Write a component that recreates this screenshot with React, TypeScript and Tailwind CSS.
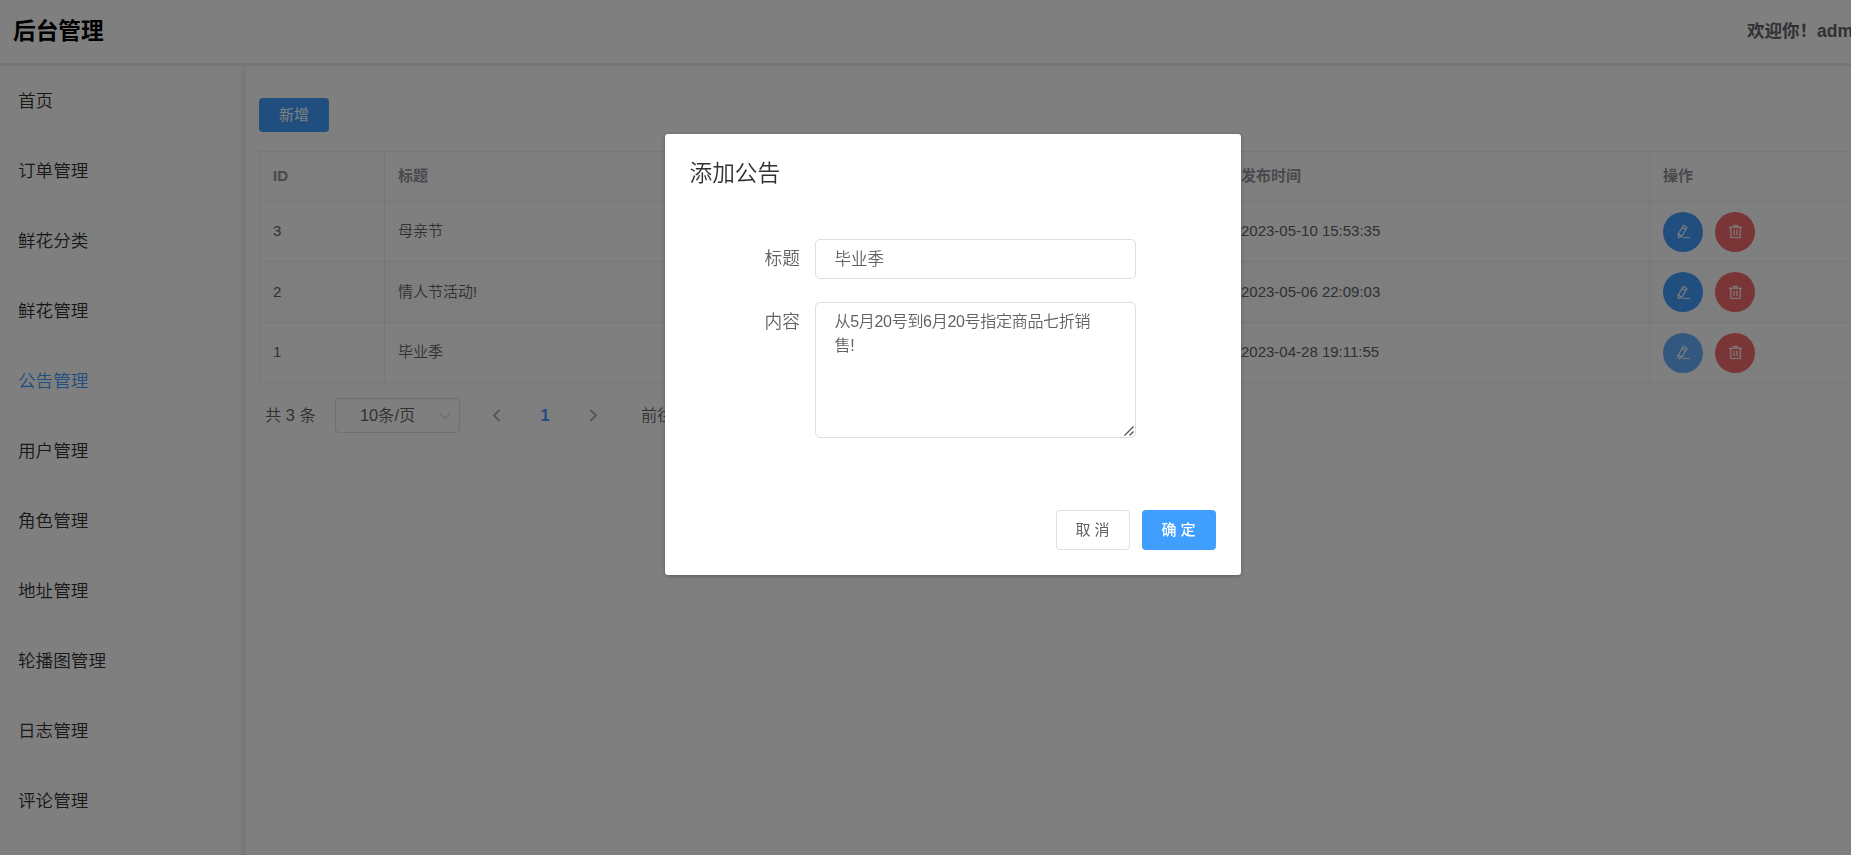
import React from "react";
import { useState } from "react";

type Notice = {
  id: number;
  title: string;
  content: string;
  time: string;
};

const menus = [
  "首页",
  "订单管理",
  "鲜花分类",
  "鲜花管理",
  "公告管理",
  "用户管理",
  "角色管理",
  "地址管理",
  "轮播图管理",
  "日志管理",
  "评论管理",
];

const notices: Notice[] = [
  { id: 3, title: "母亲节", content: "", time: "2023-05-10 15:53:35" },
  { id: 2, title: "情人节活动!", content: "", time: "2023-05-06 22:09:03" },
  { id: 1, title: "毕业季", content: "", time: "2023-04-28 19:11:55" },
];

const EditIcon = () => (
  <svg viewBox="0 0 1024 1024" className="w-[15px] h-[15px]" fill="currentColor" stroke="currentColor" strokeWidth="16">
    <path d="m199.04 672.64 193.984 112 224-387.968-193.92-112-224 388.032zm-23.872 60.16 32.896 148.288 144.896-45.696L175.168 732.8zM455.04 229.248l193.92 112 56.704-98.112-193.984-112-56.64 98.112zM104.32 708.8l384-665.024 304.768 175.936L409.152 884.8h.064l-248.448 78.336L104.32 708.8zm384 254.272v-64h448v64h-448z" />
  </svg>
);

const DeleteIcon = () => (
  <svg viewBox="0 0 1024 1024" className="w-[15px] h-[15px]" fill="currentColor" stroke="currentColor" strokeWidth="16">
    <path d="M160 256H96a32 32 0 0 1 0-64h256V95.936a32 32 0 0 1 32-32h256a32 32 0 0 1 32 32V192h256a32 32 0 1 1 0 64h-64v672a32 32 0 0 1-32 32H192a32 32 0 0 1-32-32V256zm448-64v-64H416v64h192zM224 896h576V256H224v640zm192-128a32 32 0 0 1-32-32V416a32 32 0 0 1 64 0v320a32 32 0 0 1-32 32zm192 0a32 32 0 0 1-32-32V416a32 32 0 0 1 64 0v320a32 32 0 0 1-32 32z" />
  </svg>
);

const Chevron = ({ d, className }: { d: string; className: string }) => (
  <svg viewBox="0 0 12 12" className={className} fill="none" stroke="currentColor">
    <path d={d} />
  </svg>
);

const Sidebar = () => (
  <aside className="w-[246px] shrink-0 border-r-[5px] border-[#f3f3f3]">
    <ul>
      {menus.map((name) => (
        <li
          key={name}
          className={`h-[70px] pl-[18px] leading-[70px] text-[17.6px] font-[350] ${name === "公告管理" ? "text-[#409eff]" : "text-[#303133]"}`}
        >
          {name}
        </li>
      ))}
    </ul>
  </aside>
);

const NoticeTable = () => (
  <div className="mt-[19px] overflow-hidden">
    <table className="w-[1610px] table-fixed border-collapse text-[15px] font-[350] text-[#606266]">
      <colgroup>
        <col className="w-[125px]" />
        <col className="w-[421px]" />
        <col className="w-[422px]" />
        <col className="w-[422px]" />
        <col />
      </colgroup>
      <thead>
        <tr className="h-[50px] text-left text-[#909399]">
          {["ID", "标题", "内容", "发布时间", "操作"].map((h) => (
            <th key={h} className="border border-[#ebeef5] px-[13px] py-0 font-bold">{h}</th>
          ))}
        </tr>
      </thead>
      <tbody>
        {notices.map((n, i) => (
          <tr key={n.id} className={i === 1 ? "h-[61px] bg-[#fcfcfc]" : "h-[60px]"}>
            <td className="border border-[#ebeef5] px-[13px] py-0">{n.id}</td>
            <td className="border border-[#ebeef5] px-[13px] py-0">{n.title}</td>
            <td className="border border-[#ebeef5] px-[13px] py-0">{n.content}</td>
            <td className="border border-[#ebeef5] px-[13px] py-0">{n.time}</td>
            <td className="border border-[#ebeef5] px-[13px] py-0">
              <div className="flex gap-3 text-white">
                <button className={`flex size-10 items-center justify-center rounded-full ${n.id === 1 ? "bg-[#66b1ff]" : "bg-[#409eff]"}`}>
                  <EditIcon />
                </button>
                <button className="flex size-10 items-center justify-center rounded-full bg-[#f56c6c]">
                  <DeleteIcon />
                </button>
              </div>
            </td>
          </tr>
        ))}
      </tbody>
    </table>
  </div>
);

const Pagination = () => (
  <div className="mt-[15px] flex h-[35px] items-center pl-[6px] text-[16.3px] font-[350] text-[#606266]">
    <span className="w-[70px]">共 3 条</span>
    <div className="flex h-[35px] w-[125px] items-center justify-between rounded-[4px] border border-[#dcdfe6] pl-6 pr-2">
      <span>10条/页</span>
      <Chevron d="M1 3.5 6 8.5 11 3.5" className="w-3 h-3 text-[#c0c4cc]" />
    </div>
    <Chevron d="M8.5 1.5 4 6l4.5 4.5" className="ml-[29px] w-[15px] h-[15px] text-[#a8abb2] stroke-[1.5]" />
    <span className="w-[82px] text-center font-bold text-[#409eff]">1</span>
    <Chevron d="M3.5 1.5 8 6l-4.5 4.5" className="w-[15px] h-[15px] text-[#a8abb2] stroke-[1.5]" />
    <span className="ml-[40px]">前往</span>
  </div>
);

const NoticeDialog = () => {
  const [title, setTitle] = useState("毕业季");
  const [content, setContent] = useState("从5月20号到6月20号指定商品七折销售!");

  return (
    <div className="fixed inset-0 bg-black/50">
      <div className="mx-auto mt-[134px] flex h-[441px] w-[576px] translate-x-[27px] flex-col rounded-[3px] bg-white px-[25px] shadow-[0_1px_4px_rgba(0,0,0,0.3)]">
        <h2 className="pt-[24px] text-[22.7px] leading-[30px] font-[350] text-[#303133]">添加公告</h2>
        <div className="mt-[51px] flex pl-[75px]">
          <label className="w-[50px] text-[17.7px] leading-10 font-[350] text-[#606266]">标题</label>
          <input
            value={title}
            onChange={(e) => setTitle(e.target.value)}
            className="h-10 w-[321px] rounded-[5px] border border-[#dcdfe6] px-[19px] pb-[2px] text-[16.5px] font-[350] text-[#606266] outline-none"
          />
        </div>
        <div className="mt-[23px] flex pl-[75px]">
          <label className="w-[50px] text-[17.7px] leading-10 font-[350] text-[#606266]">内容</label>
          <div className="relative h-[136px] w-[321px]">
            <textarea
              value={content}
              onChange={(e) => setContent(e.target.value)}
              className="h-full w-full resize-none rounded-[5px] border border-[#dcdfe6] py-[7px] pl-[19px] pr-[42px] text-[16px] leading-6 font-[350] tracking-[-0.3px] text-[#606266] outline-none"
            />
            <svg viewBox="0 0 10 10" className="pointer-events-none absolute right-[2px] bottom-[2px] size-[10px]" fill="none" stroke="#555" strokeWidth="1.3">
              <path d="M0.5 9.5 9.5 0.5M5.5 9.5 9.5 5.5" />
            </svg>
          </div>
        </div>
        <div className="mt-[72px] flex justify-end gap-3 text-[15px]">
          <button className="h-10 w-[74px] rounded-[4px] border border-[#dcdfe6] pt-px text-[#606266]">取 消</button>
          <button className="h-10 w-[74px] rounded-[4px] bg-[#409eff] pt-px font-medium text-white">确 定</button>
        </div>
      </div>
    </div>
  );
};

const App: React.FC = () => {
  return (
    <div className="flex h-screen flex-col overflow-hidden bg-white font-['Liberation_Sans','Noto_Sans_CJK_SC',sans-serif]">
      <header className="flex h-[66px] shrink-0 items-center justify-between border-b-[3px] border-[#ececec] pl-[13px]">
        <h1 className="text-[22.7px] font-bold text-black">后台管理</h1>
        <div className="w-[104px] whitespace-nowrap text-[17.5px] font-bold text-[#606266]">欢迎你！admin</div>
      </header>
      <div className="flex min-h-0 flex-1">
        <Sidebar />
        <main className="min-w-0 flex-1 pl-[13px] pt-[32px]">
          <button className="block h-[34px] w-[70px] rounded-[4px] bg-[#409eff] text-[15px] text-white">新增</button>
          <NoticeTable />
          <Pagination />
        </main>
      </div>
      <NoticeDialog />
    </div>
  );
};

export default App;
